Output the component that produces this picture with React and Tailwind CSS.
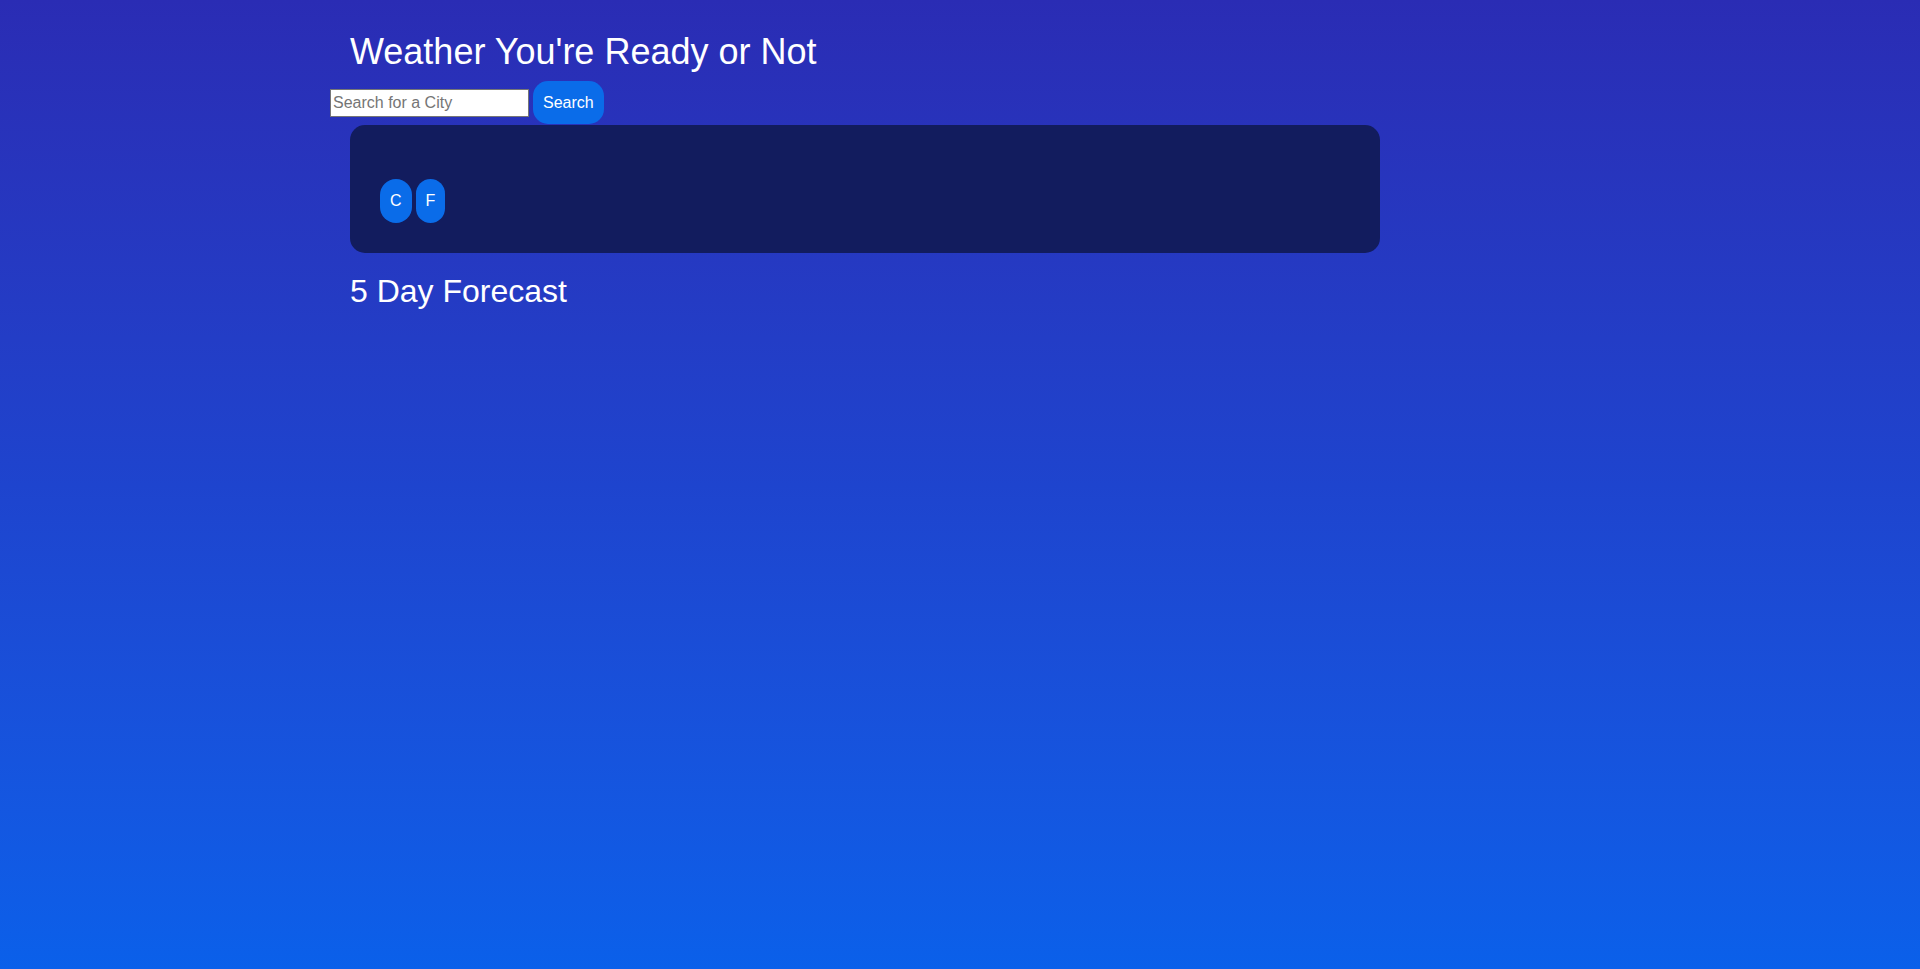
export default function App() {
  return (
    <div
      className="h-screen overflow-hidden w-full bg-gradient-to-b from-[#2a2cb4] via-[#1e44ce] to-[#0a60ea] text-white"
      style={{ fontFamily: '"Liberation Sans", Arial, sans-serif' }}
    >
      <div className="pl-[330px] pt-[32px]">
        {/* titulo */}
        <h1 className="ml-[20px] text-[36px] leading-[40px] font-normal">Weather You're Ready or Not</h1>

        {/* buscador */}
        <div className="mt-[9px] flex items-center gap-[4px]">
          <input
            type="text"
            placeholder="Search for a City"
            className="h-[28px] w-[199px] border border-[#767676] bg-white px-[2px] text-[16px] text-black placeholder:text-[#757575] outline-none"
          />
          <button className="h-[43px] rounded-[15px] bg-[#0a6ce9] px-[10px] text-[16px] text-white">Search</button>
        </div>

        {/* tarjeta actual */}
        <div className="ml-[20px] mt-[1px] h-[128px] w-[1030px] rounded-[15px] bg-[#121c5e] pl-[30px] pt-[54px]">
          <div className="flex gap-[4px]">
            <button className="h-[44px] rounded-[16px] bg-[#0a6ce9] px-[10px] text-[16px] text-white">C</button>
            <button className="h-[44px] rounded-[16px] bg-[#0a6ce9] px-[10px] text-[16px] text-white">F</button>
          </div>
        </div>

        <h2 className="ml-[20px] mt-[20px] text-[32px] leading-[36px] font-normal">5 Day Forecast</h2>
      </div>
    </div>
  );
}
